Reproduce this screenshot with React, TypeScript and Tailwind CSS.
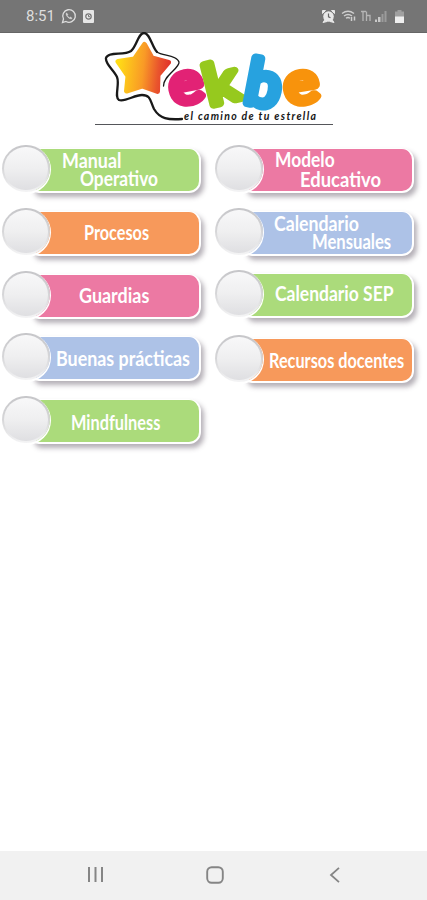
import { useLayoutEffect, useRef, useState } from 'react';
import clsx from 'clsx';

interface LabelLine {
  text: string;
  width: number;
  className: string;
}

interface MenuItem {
  id: string;
  color: string;
  // Vertical nudges inside the row: the tiles are not perfectly aligned.
  tileClass: string;
  barClass: string;
  lines: LabelLine[];
}

const GREEN = 'bg-[#abdb7b]';
const PINK = 'bg-[#ec79a3]';
const ORANGE = 'bg-[#f7995b]';
const BLUE = 'bg-[#adc2e7]';

const LEFT_ITEMS: MenuItem[] = [
  {
    id: 'manual',
    color: GREEN,
    tileClass: 'mt-0',
    barClass: 'mt-[2px] h-[45px] pt-[3px]',
    lines: [
      { text: 'Manual', width: 59, className: 'ml-[29px] h-[18px]' },
      { text: 'Operativo', width: 78, className: 'ml-[47px] h-[17px]' },
    ],
  },
  {
    id: 'procesos',
    color: ORANGE,
    tileClass: 'mt-[15px]',
    barClass: 'mt-[3px] h-[45px] pt-[12px]',
    lines: [{ text: 'Procesos', width: 65, className: 'ml-[51px]' }],
  },
  {
    id: 'guardias',
    color: PINK,
    tileClass: 'mt-[15px]',
    barClass: 'mt-[3px] h-[45px] pt-[12px]',
    lines: [{ text: 'Guardias', width: 70, className: 'ml-[46px]' }],
  },
  {
    id: 'buenas-practicas',
    color: BLUE,
    tileClass: 'mt-[14px]',
    barClass: 'mt-[2px] h-[45px] pt-[13px]',
    lines: [{ text: 'Buenas prácticas', width: 134, className: 'ml-[23px]' }],
  },
  {
    id: 'mindfulness',
    color: GREEN,
    tileClass: 'mt-[15px]',
    barClass: 'mt-[3px] h-[45px] pt-[14px]',
    lines: [{ text: 'Mindfulness', width: 89, className: 'ml-[38px]' }],
  },
];

const RIGHT_ITEMS: MenuItem[] = [
  {
    id: 'modelo',
    color: PINK,
    tileClass: 'mt-0',
    barClass: 'mt-[3px] h-[45px] pt-[2px]',
    lines: [
      { text: 'Modelo', width: 60, className: 'ml-[29px] h-[20px]' },
      { text: 'Educativo', width: 81, className: 'ml-[54px] h-[17px]' },
    ],
  },
  {
    id: 'calendario',
    color: BLUE,
    tileClass: 'mt-[15px]',
    barClass: 'mt-[2px] h-[45px] pt-[3px]',
    lines: [
      { text: 'Calendario', width: 85, className: 'ml-[28px] h-[18px]' },
      { text: 'Mensuales', width: 79, className: 'ml-[66px] h-[17px]' },
    ],
  },
  {
    id: 'calendario-sep',
    color: GREEN,
    tileClass: 'mt-[14px]',
    barClass: 'mt-[2px] h-[45px] pt-[11px]',
    lines: [{ text: 'Calendario SEP', width: 119, className: 'ml-[29px]' }],
  },
  {
    id: 'recursos',
    color: ORANGE,
    tileClass: 'mt-[17px]',
    barClass: 'mt-[2px] h-[45px] pt-[13px]',
    lines: [{ text: 'Recursos docentes', width: 135, className: 'ml-[23px]' }],
  },
];

// Condenses a line of text so that it takes exactly the given width.
function FitText({ text, width, className }: LabelLine) {
  const ref = useRef<HTMLSpanElement>(null);
  const [scale, setScale] = useState(1);

  useLayoutEffect(() => {
    if (ref.current) setScale(width / ref.current.offsetWidth);
  }, [text, width]);

  return (
    <div className={clsx('whitespace-nowrap', className)}>
      <span
        ref={ref}
        className="inline-block origin-left align-top"
        style={{ transform: `scaleX(${scale})` }}
      >
        {text}
      </span>
    </div>
  );
}

function MenuTile({ color, tileClass, barClass, lines }: Omit<MenuItem, 'id'>) {
  return (
    <button type="button" className={clsx('relative block h-12 w-[201px] text-left', tileClass)}>
      <div
        className={clsx(
          'ml-[31px] w-[170px] rounded-r-xl rounded-bl-lg border-2 border-t border-white',
          "font-['Lato'] text-[20px] leading-[17px] font-bold text-white",
          'shadow-[3px_4px_5px_rgba(90,80,95,0.45)]',
          color,
          barClass,
        )}
      >
        {lines.map((line) => (
          <FitText key={line.text} {...line} />
        ))}
      </div>
      <span className="absolute top-0 left-[2px] h-[47px] w-[48px] rounded-full bg-linear-to-b from-[#c6c6c9] via-[#d6d6d8] to-[#f4f4f5] p-[2px] shadow-[0_1px_0_1px_#fff]">
        <span className="block size-full rounded-full bg-linear-to-b from-[#f8f8f9] via-[#efeff0] to-[#dfdfe2]" />
      </span>
    </button>
  );
}

function StatusBar() {
  return (
    <header className="flex h-[33px] items-center border-b border-[#666] bg-[#757575] pr-[23px] pl-[26px] text-[#dedede]">
      <span className="font-['Roboto'] text-[15px] leading-none">8:51</span>
      <svg className="ml-[6px] size-[16px]" viewBox="0 0 16 16" fill="none" stroke="currentColor">
        <path d="M1.5 14.5l1-3.5a6.3 6.3 0 1 1 2.5 2.5z" strokeWidth="1.3" />
        <path d="M5.5 4.8c-1 1.2 0 3.2 1.5 4.6s3.3 2 4.2.9l-1.7-1.3-1 .7c-1-.4-1.8-1.3-2.2-2.2l.6-.9z" fill="currentColor" strokeWidth=".4" />
      </svg>
      <svg className="ml-[6px] h-[13px] w-[11px]" viewBox="0 0 11 13">
        <rect width="11" height="13" rx="1" fill="#e6e6e6" />
        <circle cx="5.5" cy="6.5" r="2.7" fill="none" stroke="#757575" strokeWidth="1.2" />
        <path d="M5.5 5v1.7h1.5" fill="none" stroke="#757575" />
      </svg>
      <div className="ml-auto flex items-center">
        <svg className="h-[13px] w-[13px]" viewBox="0 0 13 13">
          <path d="M.5.5h3l-3 3zM12.5.5h-3l3 3zM1 12.5l2-3 2 2zM12 12.5l-2-3-2 2z" fill="#e8e8e8" stroke="#e8e8e8" />
          <circle cx="6.5" cy="6.5" r="5.3" fill="#e8e8e8" />
          <path d="M6.5 3.5v3.3l2 1" fill="none" stroke="#666" strokeWidth="1.2" />
        </svg>
        <svg className="ml-[6px] h-[12px] w-[16px]" viewBox="0 0 16 12" fill="none" stroke="#cfcfcf">
          <path d="M1 3.5q6-4.5 12 0M3 6q4-3 8 0M5 8.3q2-1.5 4 0" strokeWidth="1.4" />
          <path d="M10.5 7v4M13.5 6.5v4" strokeWidth="1.5" />
        </svg>
        <svg className="ml-[3px] h-[12px] w-[11px]" viewBox="0 0 11 12" fill="none" stroke="#b5b5b5">
          <path d="M1 1.5h5M3 2v9M6.5 1.5v9.5M7 5.5h3v5.5" strokeWidth="1.3" />
        </svg>
        <svg className="ml-[4px] h-[12px] w-[12px]" viewBox="0 0 12 12">
          <path d="M0 9.5h2v2.5h-2zM3 7h2.5v5h-2.5z" fill="#c9c9c9" />
          <path d="M6.5 4h2v8h-2zM9.5 1h2v11h-2z" fill="#9b9b9b" />
        </svg>
        <svg className="ml-[8px] h-[13px] w-[9px]" viewBox="0 0 9 13">
          <path d="M2.5 0h4v1.5h2.5v5.5h-9v-5.5h2.5z" fill="#a0a0a0" />
          <path d="M0 6.5h9v6.5h-9z" fill="#efefef" />
        </svg>
      </div>
    </header>
  );
}

function Logo() {
  return (
    <svg className="block h-[97px] w-[240px]" viewBox="94 32 240 97">
      <defs>
        <linearGradient id="star" x1="0" x2="1" y1="0.45" y2="0.55">
          <stop offset="0" stopColor="#ffdc16" />
          <stop offset="0.5" stopColor="#f99a26" />
          <stop offset="0.8" stopColor="#e9542d" />
          <stop offset="1" stopColor="#e2362a" />
        </linearGradient>
      </defs>
      <path
        d="M144.5 44.5L152 58L168.5 62.5L158 75L157.5 91.5L142 86L126.500 91L128 76L118 61.500L134.500 59Z"
        fill="url(#star)"
        stroke="url(#star)"
        strokeWidth="5"
        strokeLinejoin="round"
      />
      <g fill="none" stroke="#191919" strokeLinecap="round">
        <path
          d="M182 119C168 120 160 119 154 109C150 101 151 95 142 95C134 95 126 102 119 100C114 97 120 84 117 77C114 70 105 64 106 58C108 51 124 56 131 51C137 46 138 33 144 33C150 33 152 47 157 52"
          strokeWidth="2.3"
        />
        <path d="M157 52C162 56 177 55 179 62C180 68 163 76 163.500 86" strokeWidth="1.3" />
      </g>
      <g
        fontFamily="Lato, sans-serif"
        fontWeight="400"
        fontSize="59"
        strokeWidth="8"
        strokeLinejoin="round"
        strokeLinecap="round"
      >
        <text transform="translate(173 105.500) rotate(-11) scale(1.060 .98)" fill="#e22275" stroke="#e22275">e</text>
        <text transform="translate(209.500 106) rotate(-14) scale(1.120 .95)" fill="#96c91e" stroke="#96c91e">k</text>
        <text transform="translate(242.500 102) rotate(11) scale(1.060 1.060)" fill="#27a2df" stroke="#27a2df">b</text>
        <text transform="translate(287 105) rotate(-9) scale(1.090 .98)" fill="#f8930c" stroke="#f8930c">e</text>
      </g>
      <text
        x="184"
        y="119.5"
        textLength="132"
        lengthAdjust="spacing"
        fontFamily="Lato, sans-serif"
        fontStyle="italic"
        fontWeight="700"
        fontSize="10.5"
        fill="#161616"
      >
        el camino de tu estrella
      </text>
      <path d="M95 124.5H333" stroke="#55565a" strokeWidth="1.2" />
    </svg>
  );
}

function NavBar() {
  return (
    <nav className="mt-auto flex h-[49px] bg-[#f1f1f1] text-[#858585]">
      <svg className="mt-[15px] ml-[87px] h-[17px] w-[17px]" viewBox="0 0 17 17" stroke="currentColor" strokeWidth="2">
        <path d="M2 1v15M8.5 1v15M15 1v15" />
      </svg>
      <svg className="mt-[14px] ml-[101px] size-5" viewBox="0 0 20 20" fill="none" stroke="currentColor" strokeWidth="1.9">
        <rect x="2.2" y="2.2" width="15.6" height="15.6" rx="4.5" />
      </svg>
      <svg className="mt-[15px] ml-[103px] h-[18px] w-[14px]" viewBox="0 0 14 18" fill="none" stroke="currentColor" strokeWidth="1.8">
        <path d="M11 1.8L3 9l8 7.2" />
      </svg>
    </nav>
  );
}

export default function App() {
  return (
    <div className="flex h-[900px] w-[427px] flex-col overflow-hidden bg-white">
      <StatusBar />
      <div className="-mt-px pl-[94px]">
        <Logo />
      </div>
      <main className="mt-4 grid grid-cols-[213px_214px]">
        <div>
          {LEFT_ITEMS.map(({ id, ...item }) => (
            <MenuTile key={id} {...item} />
          ))}
        </div>
        <div>
          {RIGHT_ITEMS.map(({ id, ...item }) => (
            <MenuTile key={id} {...item} />
          ))}
        </div>
      </main>
      <NavBar />
    </div>
  );
}
